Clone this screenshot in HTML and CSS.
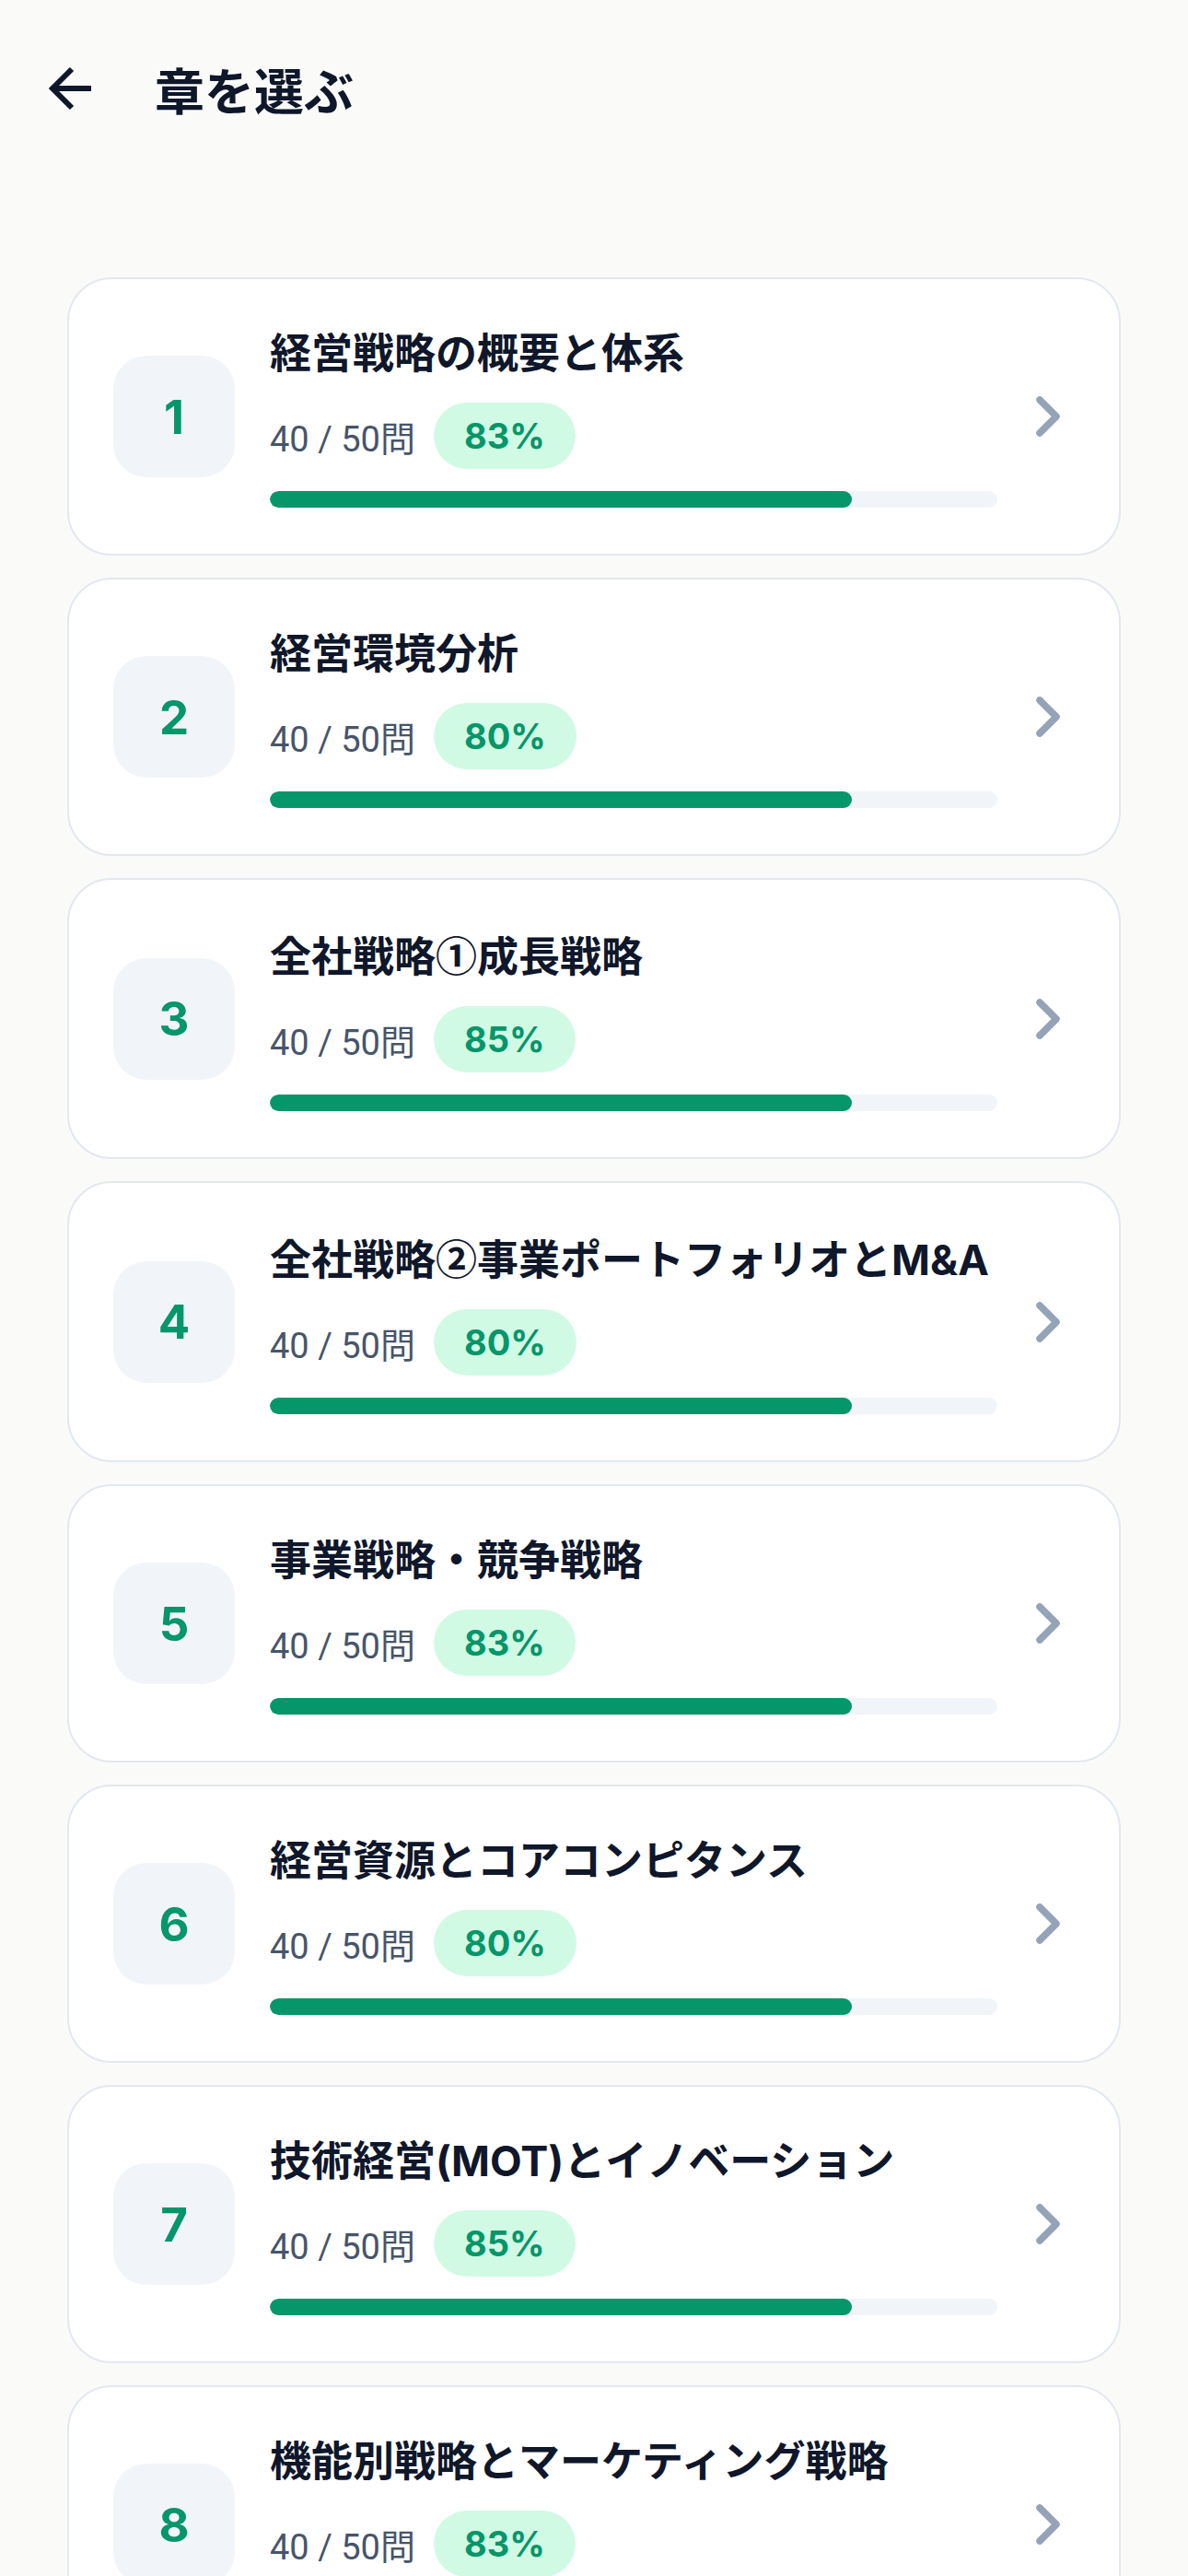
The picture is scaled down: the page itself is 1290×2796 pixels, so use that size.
FILE: index.html
```html
<!DOCTYPE html>
<html lang="ja">
<head>
    <meta charset="UTF-8">
    <meta name="viewport" content="width=device-width, initial-scale=1.0">
    <title>章を選ぶ</title>
    <link rel="stylesheet" href="styles.css">
</head>
<body>
    <header class="top-bar">
        <button class="back-btn" aria-label="戻る">
            <svg width="72" height="72" viewBox="0 0 24 24" fill="none" stroke="#0f172a" stroke-width="2" stroke-linecap="butt" stroke-linejoin="miter">
                <path d="m12 19-7-7 7-7"/>
                <path d="M19 12H5"/>
            </svg>
        </button>
        <h1>章を選ぶ</h1>
    </header>

    <main class="chapter-list">
        <a class="chapter-card" href="#">
            <div class="chapter-num">1</div>
            <div class="chapter-info">
                <h2>経営戦略の概要と体系</h2>
                <div class="chapter-stats">
                    <span class="count">40 / 50問</span>
                    <span class="badge">83%</span>
                </div>
                <div class="progress"><div class="progress-fill" style="width: 80%"></div></div>
            </div>
            <svg class="chevron" width="30" height="48" viewBox="0 0 30 48" fill="none" stroke="#94a3b8" stroke-width="7.5" stroke-linecap="round" stroke-linejoin="round"><path d="M6 6l18 18-18 18"/></svg>
        </a>

        <a class="chapter-card" href="#">
            <div class="chapter-num">2</div>
            <div class="chapter-info">
                <h2>経営環境分析</h2>
                <div class="chapter-stats">
                    <span class="count">40 / 50問</span>
                    <span class="badge">80%</span>
                </div>
                <div class="progress"><div class="progress-fill" style="width: 80%"></div></div>
            </div>
            <svg class="chevron" width="30" height="48" viewBox="0 0 30 48" fill="none" stroke="#94a3b8" stroke-width="7.5" stroke-linecap="round" stroke-linejoin="round"><path d="M6 6l18 18-18 18"/></svg>
        </a>

        <a class="chapter-card" href="#">
            <div class="chapter-num">3</div>
            <div class="chapter-info">
                <h2>全社戦略<span class="cjk">①</span>成長戦略</h2>
                <div class="chapter-stats">
                    <span class="count">40 / 50問</span>
                    <span class="badge">85%</span>
                </div>
                <div class="progress"><div class="progress-fill" style="width: 80%"></div></div>
            </div>
            <svg class="chevron" width="30" height="48" viewBox="0 0 30 48" fill="none" stroke="#94a3b8" stroke-width="7.5" stroke-linecap="round" stroke-linejoin="round"><path d="M6 6l18 18-18 18"/></svg>
        </a>

        <a class="chapter-card" href="#">
            <div class="chapter-num">4</div>
            <div class="chapter-info">
                <h2>全社戦略<span class="cjk">②</span>事業ポートフォリオとM&amp;A</h2>
                <div class="chapter-stats">
                    <span class="count">40 / 50問</span>
                    <span class="badge">80%</span>
                </div>
                <div class="progress"><div class="progress-fill" style="width: 80%"></div></div>
            </div>
            <svg class="chevron" width="30" height="48" viewBox="0 0 30 48" fill="none" stroke="#94a3b8" stroke-width="7.5" stroke-linecap="round" stroke-linejoin="round"><path d="M6 6l18 18-18 18"/></svg>
        </a>

        <a class="chapter-card" href="#">
            <div class="chapter-num">5</div>
            <div class="chapter-info">
                <h2>事業戦略・競争戦略</h2>
                <div class="chapter-stats">
                    <span class="count">40 / 50問</span>
                    <span class="badge">83%</span>
                </div>
                <div class="progress"><div class="progress-fill" style="width: 80%"></div></div>
            </div>
            <svg class="chevron" width="30" height="48" viewBox="0 0 30 48" fill="none" stroke="#94a3b8" stroke-width="7.5" stroke-linecap="round" stroke-linejoin="round"><path d="M6 6l18 18-18 18"/></svg>
        </a>

        <a class="chapter-card" href="#">
            <div class="chapter-num">6</div>
            <div class="chapter-info">
                <h2>経営資源とコアコンピタンス</h2>
                <div class="chapter-stats">
                    <span class="count">40 / 50問</span>
                    <span class="badge">80%</span>
                </div>
                <div class="progress"><div class="progress-fill" style="width: 80%"></div></div>
            </div>
            <svg class="chevron" width="30" height="48" viewBox="0 0 30 48" fill="none" stroke="#94a3b8" stroke-width="7.5" stroke-linecap="round" stroke-linejoin="round"><path d="M6 6l18 18-18 18"/></svg>
        </a>

        <a class="chapter-card" href="#">
            <div class="chapter-num">7</div>
            <div class="chapter-info">
                <h2>技術経営(MOT)とイノベーション</h2>
                <div class="chapter-stats">
                    <span class="count">40 / 50問</span>
                    <span class="badge">85%</span>
                </div>
                <div class="progress"><div class="progress-fill" style="width: 80%"></div></div>
            </div>
            <svg class="chevron" width="30" height="48" viewBox="0 0 30 48" fill="none" stroke="#94a3b8" stroke-width="7.5" stroke-linecap="round" stroke-linejoin="round"><path d="M6 6l18 18-18 18"/></svg>
        </a>

        <a class="chapter-card" href="#">
            <div class="chapter-num">8</div>
            <div class="chapter-info">
                <h2>機能別戦略とマーケティング戦略</h2>
                <div class="chapter-stats">
                    <span class="count">40 / 50問</span>
                    <span class="badge">83%</span>
                </div>
                <div class="progress"><div class="progress-fill" style="width: 80%"></div></div>
            </div>
            <svg class="chevron" width="30" height="48" viewBox="0 0 30 48" fill="none" stroke="#94a3b8" stroke-width="7.5" stroke-linecap="round" stroke-linejoin="round"><path d="M6 6l18 18-18 18"/></svg>
        </a>
    </main>
</body>
</html>
```

FILE: styles.css
```css
body {
    font-family: 'Inter', 'Noto Sans CJK JP', sans-serif;
    background-color: #fafaf9;
    color: #0f172a;
    margin: 0;
    padding: 0;
    height: 2796px;
    overflow: hidden;
}
.top-bar {
    display: flex;
    align-items: center;
    height: 192px;
    padding-left: 42px;
    gap: 54px;
}
.back-btn {
    background: none;
    border: none;
    padding: 0;
    width: 72px;
    height: 72px;
    display: flex;
}
.top-bar h1 {
    margin: 0;
    font-size: 54px;
    font-weight: 700;
    color: #0f172a;
}
.chapter-list {
    display: flex;
    flex-direction: column;
    gap: 24px;
    padding: 109px 73px 0 73px;
}
.chapter-card {
    display: flex;
    align-items: center;
    background: white;
    border: 2px solid #e2e8f0;
    border-radius: 48px;
    padding: 50px 62px 50px 48px;
    text-decoration: none;
    color: inherit;
}
.chapter-num {
    flex: none;
    width: 132px;
    height: 132px;
    border-radius: 36px;
    background-color: #f1f5f9;
    color: #059669;
    font-size: 51px;
    font-weight: 700;
    display: flex;
    align-items: center;
    justify-content: center;
    margin-right: 38px;
}
.chapter-info {
    flex: 1;
    display: flex;
    flex-direction: column;
    gap: 24px;
}
.chapter-info h2 {
    margin: 0;
    font-size: 45px;
    line-height: 62px;
    margin-bottom: -2px;
    font-weight: 700;
    color: #0f172a;
    white-space: nowrap;
}
.cjk {
    font-family: 'Noto Sans CJK JP', sans-serif;
}
.chapter-stats {
    display: flex;
    align-items: center;
    gap: 20px;
}
.count {
    font-family: 'Roboto', 'Noto Sans CJK JP', sans-serif;
    font-size: 38px;
    color: #475569;
}
.badge {
    background-color: #d1fae5;
    color: #059669;
    font-size: 38px;
    font-weight: 700;
    height: 72px;
    line-height: 72px;
    padding: 0 33px;
    border-radius: 36px;
}
.progress {
    height: 18px;
    border-radius: 9px;
    background-color: #f1f5f9;
    overflow: hidden;
}
.progress-fill {
    height: 100%;
    border-radius: 9px;
    background-color: #059669;
}
.chevron {
    flex: none;
    margin-left: 40px;
}
```
